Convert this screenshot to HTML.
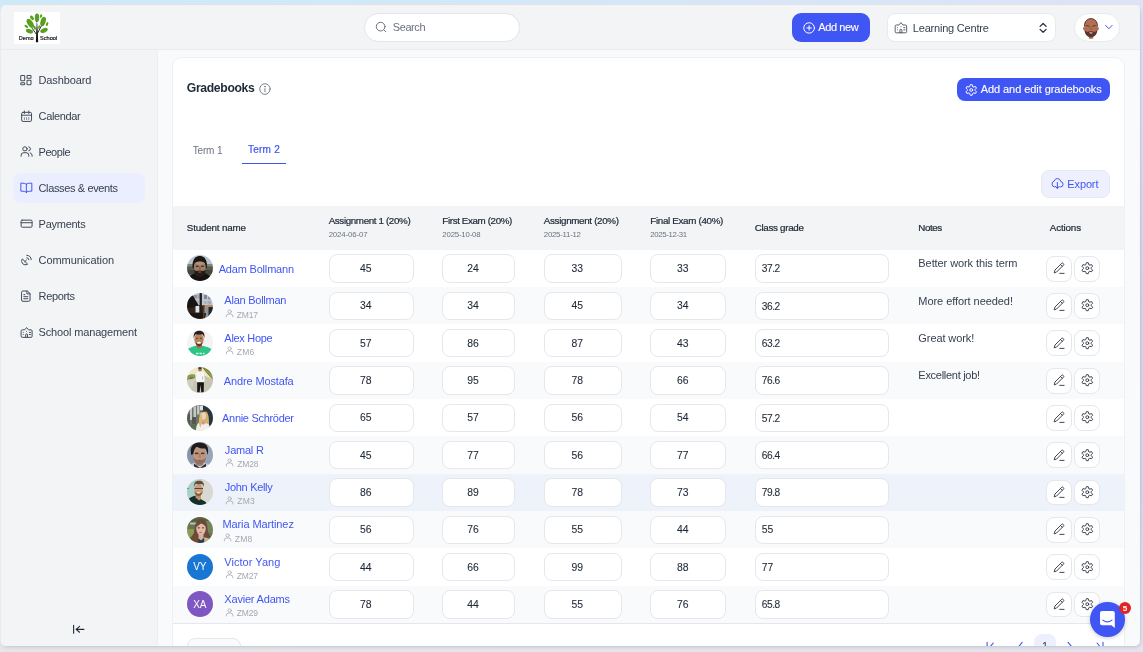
<!DOCTYPE html>
<html lang="en"><head><meta charset="utf-8"><title>Gradebooks</title>
<style>
*{box-sizing:border-box;margin:0;padding:0}
html,body{width:1143px;height:652px;overflow:hidden}
body{position:relative;font-family:"Liberation Sans",sans-serif;background:#e6e7eb;
 background-image:linear-gradient(90deg,#cdeaf8 0%,#d3e8f8 45%,#dee3f8 100%);background-size:100% 30px;background-repeat:no-repeat}
#rstrip{position:absolute;right:0;top:8px;width:8px;height:644px;background:linear-gradient(180deg,#dee3f8 0,#d2d8f2 45%,#d6daf1 75%,#e3e4ee 100%)}
#bstrip{position:absolute;left:0;top:640px;width:1143px;height:12px;background:linear-gradient(90deg,#e6e7ea 0,#e5e6ec 70%,#e3e4ee 100%)}
#ledge{left:0;top:0;width:1px;height:652px;background:#ebebec}
#shadow{position:absolute;left:1px;top:6px;width:1139px;height:640px;border-radius:5px;box-shadow:0 2px 4px -1px rgba(40,40,50,.13), 2px 1px 3px -1px rgba(40,40,60,.10)}
#win{will-change:transform;position:absolute;left:0;top:0;width:1143px;height:652px;clip-path:inset(4px 3.1px 6px 0px round 8px 5px 5px 6px);background:#f9fafb}
#win>*, .abs{position:absolute}
.t{position:absolute;white-space:nowrap;line-height:1}
#top{left:0;top:0;width:1143px;height:49.5px;background:#f3f4f6;border-bottom:1px solid #e9ebee;border-top:5.4px solid #e1e1e3}
#side{left:0;top:49.5px;width:157.5px;height:610px;background:#f3f4f6;border-right:1px solid #eceef1}
#card{left:171.5px;top:57px;width:953px;height:620px;background:#fff;border:1px solid #eef0f3;border-radius:10px}
.pill{background:#fff;border:1px solid #e5e7eb}
.box{background:#fff;border:1px solid #e5e7eb;border-radius:8px;height:28.5px}
.ab{background:#fff;border:1px solid #e5e7eb;border-radius:8px;width:25.5px;height:25.5px}
.av{border-radius:50%;width:26px;height:26px;overflow:hidden}
svg{position:absolute;overflow:visible}
svg.ns *{vector-effect:non-scaling-stroke}

</style></head>
<body>
<div id="rstrip"></div><div id="bstrip"></div>
<div id="shadow"></div>
<div id="win">
<div id="top"></div><div id="side"></div><div id="ledge"></div><div id="card"></div>

<svg style="left:14px;top:12px" width="46" height="32" viewBox="0 0 46 32"><rect width="46" height="32" fill="#fff"/>
<g fill="#57a01d"><ellipse cx="23" cy="5.800" rx="2.200" ry="4.200"/><ellipse cx="18" cy="5.800" rx="1.500" ry="2.600" transform="rotate(-38 18 5.800)"/><ellipse cx="27" cy="4" rx="1.100" ry="1.900" transform="rotate(15 27 4)"/><ellipse cx="16.200" cy="11.300" rx="2.700" ry="5" transform="rotate(-33 16.200 11.300)"/><ellipse cx="29.100" cy="9.500" rx="2.500" ry="4.800" transform="rotate(18 29.100 9.500)"/><ellipse cx="12.300" cy="14.400" rx="1.200" ry="2.100" transform="rotate(-50 12.300 14.400)"/><ellipse cx="33.100" cy="12.100" rx="1.100" ry="2.100" transform="rotate(22 33.100 12.100)"/><ellipse cx="15.500" cy="19.200" rx="3.700" ry="2.100" transform="rotate(18 15.500 19.200)"/><ellipse cx="30" cy="18.400" rx="3.900" ry="2.200" transform="rotate(-24 30 18.400)"/><ellipse cx="20.500" cy="15.600" rx="1.200" ry="2.300" transform="rotate(-25 20.500 15.600)"/><ellipse cx="25.100" cy="15" rx=".9" ry="1.900" transform="rotate(20 25.100 15)"/></g>
<path d="M22.900 7.500 23.700 18.500 24.200 30.300 21.900 30.300 22.300 18.500Z" fill="#111"/>
<path d="M22.600 22.500 18.300 16.500M23.500 21.300 27.300 14" stroke="#1a1a1a" stroke-width=".9" fill="none" stroke-linecap="round"/>
<text x="4.800" y="27.900" font-family="Liberation Sans, sans-serif" font-weight="400" font-size="5.100" fill="#1a1a1a" stroke="#1a1a1a" stroke-width=".18" textLength="14.800" lengthAdjust="spacingAndGlyphs">Demo</text>
<text x="26" y="27.900" font-family="Liberation Sans, sans-serif" font-weight="400" font-size="5.100" fill="#1a1a1a" stroke="#1a1a1a" stroke-width=".18" textLength="17.200" lengthAdjust="spacingAndGlyphs">School</text></svg>

<div class="pill" style="left:363.70px;top:13.10px;width:155.90px;height:28.80px;border-radius:14.4px;border-color:#e2e5e9;"></div>
<svg class="ns" style="left:374.72px;top:21.22px;color:#6b7280" width="12.32" height="12.32" viewBox="0 0 24 24" preserveAspectRatio="none" fill="none" stroke="#6b7280" stroke-width="1.0" stroke-linecap="round" stroke-linejoin="round"><circle cx="11" cy="11" r="8.500"/><path d="M17.500 17.500 21 21"/></svg>
<div style="left:791.70px;top:13.00px;width:78.30px;height:29.20px;background:#4056f4;border-radius:9px;"></div>
<svg class="ns" style="left:802.54px;top:21.56px;color:#fff" width="12.23" height="11.89" viewBox="0 0 24 24" preserveAspectRatio="none" fill="none" stroke="#fff" stroke-width="1.0" stroke-linecap="round" stroke-linejoin="round"><circle cx="12" cy="12" r="10.500"/><path d="M12 7.500v9M7.500 12h9"/></svg>
<div class="pill" style="left:887.30px;top:13.20px;width:169.10px;height:28.60px;border-radius:8px;border-color:#e8eaed;"></div>
<svg class="ns" style="left:893.90px;top:20.74px;color:#434c5a" width="13.80" height="12.88" viewBox="0 0 24 24" preserveAspectRatio="none" fill="none" stroke="#434c5a" stroke-width="0.9" stroke-linecap="round" stroke-linejoin="round"><path d="M2 9.500a2 2 0 0 1 2-2h4.500L12 3l3.500 4.500H20a2 2 0 0 1 2 2V20a2 2 0 0 1-2 2H4a2 2 0 0 1-2-2Z"/><path d="M10.300 22v-5a1.700 1.700 0 0 1 3.400 0V22"/><path d="M12 10.500v.1M6 12.500v.1M6 16.500v.1M17 12.500h2M17 16.500h2"/></svg>
<svg class="ns" style="left:1037.05px;top:21.63px;color:#1f2937" width="12.20" height="11.73" viewBox="0 0 24 24" preserveAspectRatio="none" fill="none" stroke="#1f2937" stroke-width="1.2" stroke-linecap="round" stroke-linejoin="round"><path d="M6 9l6-6 6 6M6 15l6 6 6-6"/></svg>
<div class="pill" style="left:1074.20px;top:13.00px;width:45.70px;height:28.90px;border-radius:14.5px;border-color:#e8eaed;"></div>
<svg style="left:1083px;top:18.300px" width="16" height="21" viewBox="0 0 16 21">
<rect x="5.900" y="17" width="4.300" height="3.700" rx=".6" fill="#b46a4e"/>
<ellipse cx="1" cy="10.600" rx="1" ry="1.500" fill="#ad694d"/><ellipse cx="14.900" cy="10.600" rx="1" ry="1.500" fill="#ad694d"/>
<path d="M1.300 9C1.300 2.500 4.500.5 7.950.5S14.600 2.500 14.600 9c0 6.500-3.300 10-6.650 10S1.300 15.500 1.300 9Z" fill="#b36f53"/>
<path d="M1.500 8.500C1.300 3 4.500.7 7.950.7S14.600 3 14.400 8.500" fill="none" stroke="#4c2c24" stroke-width=".9"/>
<path d="M1.500 11c.6 1.800 1.500 2.600 3 3 1.200-.9 5.700-.9 6.900 0 1.500-.4 2.400-1.200 3-3 .2 5.500-3.200 8.200-6.450 8.200S1.300 16.500 1.500 11Z" fill="#5b352b"/>
<ellipse cx="7.950" cy="14.800" rx="1.700" ry=".9" fill="#c9a39a"/>
<path d="M3.600 7.600l2.400.5M12.300 7.600l-2.400.5" stroke="#3c231d" stroke-width=".8" stroke-linecap="round"/>
<path d="M7.400 8.500h1.100v3.300H7.400Z" fill="#98583f"/>
</svg>

<svg class="ns" style="left:1103.97px;top:22.20px;color:#4056f4" width="9.75" height="10.20" viewBox="0 0 24 24" preserveAspectRatio="none" fill="none" stroke="#4056f4" stroke-width="1.0" stroke-linecap="round" stroke-linejoin="round"><path d="M4 8l8 8 8-8"/></svg>
<div style="left:12.70px;top:172.80px;width:132.80px;height:30.00px;background:#ebeefe;border-radius:8px;"></div>
<svg class="ns" style="left:19.48px;top:73.65px;color:#434c5a" width="13.73" height="11.62" viewBox="0 0 24 24" preserveAspectRatio="none" fill="none" stroke="#434c5a" stroke-width="1.0" stroke-linecap="round" stroke-linejoin="round"><rect x="3" y="3" width="7" height="11" rx="1.5"/><rect x="14" y="3" width="7" height="6" rx="1.5"/><rect x="3" y="18" width="7" height="4" rx="1.5"/><rect x="14" y="13" width="7" height="9" rx="1.5"/></svg>
<svg class="ns" style="left:19.75px;top:109.76px;color:#434c5a" width="13.20" height="12.48" viewBox="0 0 24 24" preserveAspectRatio="none" fill="none" stroke="#434c5a" stroke-width="1.0" stroke-linecap="round" stroke-linejoin="round"><rect x="3" y="4.5" width="18" height="17.5" rx="2.5"/><path d="M3 10h18M8 2v4.500M16 2v4.500"/><path d="M8 14.500v4M12 14.500v4M16 14.500v4" stroke-opacity=".6"/></svg>
<svg class="ns" style="left:19.50px;top:145.30px;color:#434c5a" width="13.20" height="12.32" viewBox="0 0 24 24" preserveAspectRatio="none" fill="none" stroke="#434c5a" stroke-width="1.0" stroke-linecap="round" stroke-linejoin="round"><circle cx="9" cy="7.5" r="4"/><path d="M2 22v-2a5 5 0 0 1 5-5h4a5 5 0 0 1 5 5v2"/><path d="M16 3.6a4 4 0 0 1 0 7.8M22 22v-2a5 5 0 0 0-3.5-4.7"/></svg>
<svg class="ns" style="left:18.77px;top:180.67px;color:#4056f4" width="14.67" height="12.80" viewBox="0 0 24 24" preserveAspectRatio="none" fill="none" stroke="#4056f4" stroke-width="1.0" stroke-linecap="round" stroke-linejoin="round"><path d="M12 6v16M12 6c-1.5-1.5-4-2-9-2v15c5 0 7.5.5 9 2M12 6c1.500-1.500 4-2 9-2v15c-5 0-7.500.5-9 2"/></svg>
<svg class="ns" style="left:19.50px;top:218.17px;color:#434c5a" width="13.20" height="11.36" viewBox="0 0 24 24" preserveAspectRatio="none" fill="none" stroke="#434c5a" stroke-width="1.0" stroke-linecap="round" stroke-linejoin="round"><rect x="2" y="4.500" width="20" height="15" rx="1.800" ry="2.600"/><path d="M2 10h20"/></svg>
<svg class="ns" style="left:19.84px;top:253.50px;color:#434c5a" width="12.57" height="12.44" viewBox="0 0 24 24" preserveAspectRatio="none" fill="none" stroke="#434c5a" stroke-width="1.0" stroke-linecap="round" stroke-linejoin="round"><path d="M4 10a7.300 7.300 0 0 0 10 10Z"/><path d="M9 15l3.500-3.500"/><path d="M13 7a4.500 4.500 0 0 1 4 4M13 2.500a9 9 0 0 1 8.500 8.500"/></svg>
<svg class="ns" style="left:19.35px;top:289.77px;color:#434c5a" width="13.60" height="12.36" viewBox="0 0 24 24" preserveAspectRatio="none" fill="none" stroke="#434c5a" stroke-width="1.0" stroke-linecap="round" stroke-linejoin="round"><path d="M14 2H7a2.500 2.500 0 0 0-2.500 2.500v15A2.500 2.500 0 0 0 7 22h10a2.500 2.500 0 0 0 2.500-2.500V7.500Z"/><path d="M14 2v5.500h5.500M8.500 13h7M8.500 17h7M8.500 9h2"/></svg>
<svg class="ns" style="left:19.50px;top:326.05px;color:#434c5a" width="13.20" height="12.38" viewBox="0 0 24 24" preserveAspectRatio="none" fill="none" stroke="#434c5a" stroke-width="1.0" stroke-linecap="round" stroke-linejoin="round"><path d="M2 9.500a2 2 0 0 1 2-2h4.500L12 3l3.500 4.500H20a2 2 0 0 1 2 2V20a2 2 0 0 1-2 2H4a2 2 0 0 1-2-2Z"/><path d="M10.300 22v-5a1.700 1.700 0 0 1 3.400 0V22"/><path d="M12 10.500v.1M6 12.500v.1M6 16.500v.1M17 12.500h2M17 16.500h2"/></svg>
<svg class="ns" style="left:72.42px;top:623.72px;color:#1f2937" width="13.01" height="10.67" viewBox="0 0 24 24" preserveAspectRatio="none" fill="none" stroke="#1f2937" stroke-width="1.1" stroke-linecap="round" stroke-linejoin="round"><path d="M3 3v18M22 12H8M14 5.500 7.500 12l6.500 6.500"/></svg>
<svg class="ns" style="left:258.71px;top:82.69px;color:#6b7280" width="11.89" height="12.11" viewBox="0 0 24 24" preserveAspectRatio="none" fill="none" stroke="#6b7280" stroke-width="0.9" stroke-linecap="round" stroke-linejoin="round"><circle cx="12" cy="12" r="10.500"/><path d="M12 11v6.500"/><circle cx="12" cy="7.300" r=".6" fill="currentColor"/></svg>
<div style="left:956.80px;top:78.20px;width:153.20px;height:22.70px;background:#4056f4;border-radius:8px;"></div>
<svg class="ns" style="left:965.02px;top:83.83px;color:#fff" width="12.45" height="11.94" viewBox="0 0 24 24" preserveAspectRatio="none" fill="none" stroke="#fff" stroke-width="1.0" stroke-linecap="round" stroke-linejoin="round"><path d="M15.01 5.24 L13.78 1.35 L10.22 1.35 L8.99 5.24 L7.65 6.01 L3.67 5.13 L1.88 8.22 L4.64 11.23 L4.64 12.77 L1.88 15.78 L3.67 18.87 L7.65 17.99 L8.99 18.76 L10.22 22.65 L13.78 22.65 L15.01 18.76 L16.35 17.99 L20.33 18.87 L22.12 15.78 L19.36 12.77 L19.36 11.23 L22.12 8.22 L20.33 5.13 L16.35 6.01Z"/><circle cx="12" cy="12" r="2.8"/></svg>
<div style="left:242.00px;top:162.50px;width:43.80px;height:1.20px;background:#4056f4;"></div>
<div style="left:1041.00px;top:169.50px;width:68.60px;height:28.80px;background:#eef0fd;border:1px solid #e6e8f6;border-radius:8px;"></div>
<svg class="ns" style="left:1051.44px;top:175.97px;color:#4056f4" width="12.72" height="14.20" viewBox="0 0 24 24" preserveAspectRatio="none" fill="none" stroke="#4056f4" stroke-width="1.0" stroke-linecap="round" stroke-linejoin="round"><path d="M7.500 18.500H7A5 5 0 0 1 6 8.600 6.500 6.500 0 0 1 18.500 9.500 4.500 4.500 0 0 1 18 18.500h-1"/><path d="M12 11v10M8.500 17.500 12 21l3.500-3.500"/></svg>
<div style="left:172.50px;top:205.50px;width:951.00px;height:44.30px;background:#f3f4f6;"></div>
<div style="left:172.50px;top:249.75px;width:951.00px;height:37.38px;background:#fff;"></div>
<svg style="left:186.80px;top:255.47px;overflow:hidden;border-radius:50%" width="26" height="26" viewBox="0 0 26 26"><g style="filter:blur(.6px)"><rect width="26" height="26" fill="#5a5b4c"/>
<rect width="26" height="9.300" fill="#b6c5d1"/>
<rect y="9" width="26" height="2.500" fill="#7f867a"/>
<rect y="15" width="26" height="4" fill="#45463a"/>
<ellipse cx="13" cy="27.500" rx="13.500" ry="10" fill="#141311"/>
<path d="M5.700 13C4.800 6 7.500 1 12.800 1s8 5 7 12l-1.200.5-1-6.500h-9.800l-1 6.500Z" fill="#1c1713"/>
<ellipse cx="12.800" cy="12.800" rx="5.900" ry="8.300" fill="#a07f69"/>
<path d="M6.900 9c0-3 2.500-5 5.900-5s5.900 2 5.900 5c-1.500-2-3.500-2.500-5.900-2.500S8.400 7 6.900 9Z" fill="#1c1713"/>
<ellipse cx="12.800" cy="8.300" rx="4" ry="1.600" fill="#b3917b"/>
<ellipse cx="10.200" cy="11.300" rx="1.600" ry=".75" fill="#3b2b24"/><ellipse cx="15.500" cy="11.300" rx="1.600" ry=".75" fill="#3b2b24"/>
<path d="M12.200 11.500h1.200l.5 3h-2.200Z" fill="#8d6852"/>
<path d="M7.100 14.500c0 5.500 2.800 7.600 5.700 7.600s5.700-2.100 5.700-7.600c-1.200 1.200-2 1.500-3 1.500-.8-.7-4.600-.7-5.400 0-1 0-1.800-.3-3-1.500Z" fill="#261c17"/>
<ellipse cx="12.800" cy="17" rx="1.700" ry=".7" fill="#86544e"/></g></svg>
<div class="box" style="left:328.75px;top:254.32px;width:84.75px;height:28.30px;"></div>
<div class="box" style="left:442.00px;top:254.32px;width:72.75px;height:28.30px;"></div>
<div class="box" style="left:543.75px;top:254.32px;width:77.75px;height:28.30px;"></div>
<div class="box" style="left:650.25px;top:254.32px;width:75.50px;height:28.30px;"></div>
<div class="box" style="left:754.50px;top:254.32px;width:134.00px;height:28.30px;"></div>
<div class="ab" style="left:1046.10px;top:255.72px;width:25.50px;height:25.80px;"></div>
<div class="ab" style="left:1074.30px;top:255.72px;width:26.10px;height:25.80px;"></div>
<svg class="ns" style="left:1051.64px;top:261.10px;color:#2b3340" width="13.84" height="13.81" viewBox="0 0 24 24" preserveAspectRatio="none" fill="none" stroke="#2b3340" stroke-width="0.9" stroke-linecap="round" stroke-linejoin="round"><path d="M4 20l1.200-4.300L16.800 4.100a1.800 1.800 0 0 1 2.500 0l.6.6a1.800 1.800 0 0 1 0 2.500L8.300 18.800ZM14.800 6.100l3.100 3.100M13.500 21.500h7.500"/></svg>
<svg class="ns" style="left:1081.07px;top:262.12px;color:#2b3340" width="12.57" height="12.39" viewBox="0 0 24 24" preserveAspectRatio="none" fill="none" stroke="#2b3340" stroke-width="0.9" stroke-linecap="round" stroke-linejoin="round"><path d="M15.01 5.24 L13.78 1.35 L10.22 1.35 L8.99 5.24 L7.65 6.01 L3.67 5.13 L1.88 8.22 L4.64 11.23 L4.64 12.77 L1.88 15.78 L3.67 18.87 L7.65 17.99 L8.99 18.76 L10.22 22.65 L13.78 22.65 L15.01 18.76 L16.35 17.99 L20.33 18.87 L22.12 15.78 L19.36 12.77 L19.36 11.23 L22.12 8.22 L20.33 5.13 L16.35 6.01Z"/><circle cx="12" cy="12" r="2.8"/></svg>
<div style="left:172.50px;top:287.08px;width:951.00px;height:37.38px;background:#f9fafb;"></div>
<svg style="left:186.80px;top:292.80px;overflow:hidden;border-radius:50%" width="26" height="26" viewBox="0 0 26 26"><g style="filter:blur(.6px)"><rect width="26" height="26" fill="#c3c8d0"/>
<rect x="7" y="2" width="3" height="3.500" fill="#8d97a6"/><rect x="10.500" y="1.500" width="2" height="4" fill="#99a3b0"/>
<rect x="17" y="2" width="3" height="4" fill="#7e8896"/><rect x="21" y="3.500" width="2.500" height="3" fill="#8a94a2"/>
<rect x="8" y="7.500" width="4" height="3" fill="#a9b1bc"/><rect x="17" y="8" width="2.500" height="3" fill="#aab2bd"/><rect x="20.500" y="8" width="3.500" height="3.500" fill="#a2abb7"/>
<path d="M0 3 6 2.500 9 8 11.500 12 10 13.500 10.500 20 0 24Z" fill="#171412"/>
<path d="M0 15 8 14 12 12 16 12.500 17.500 26H0Z" fill="#33241b"/>
<rect x="8.500" y="13" width="4" height="6.500" fill="#dfe3e8"/>
<rect x="12.600" y="0" width="2.300" height="26" fill="#211e1d"/>
<path d="M16 12h10v3H16Z" fill="#b98d68"/>
<path d="M17.500 14.500H26V26H17.500Z" fill="#8d939c"/>
<path d="M21.500 14h4.500v10h-4.500Z" fill="#23262b"/>
<path d="M3 20h16l-1 6H5Z" fill="#191513"/>
<rect x="16" y="12" width="1.600" height="14" fill="#5a3a26"/></g></svg>
<div class="box" style="left:328.75px;top:291.64px;width:84.75px;height:28.30px;"></div>
<div class="box" style="left:442.00px;top:291.64px;width:72.75px;height:28.30px;"></div>
<div class="box" style="left:543.75px;top:291.64px;width:77.75px;height:28.30px;"></div>
<div class="box" style="left:650.25px;top:291.64px;width:75.50px;height:28.30px;"></div>
<div class="box" style="left:754.50px;top:291.64px;width:134.00px;height:28.30px;"></div>
<div class="ab" style="left:1046.10px;top:293.05px;width:25.50px;height:25.80px;"></div>
<div class="ab" style="left:1074.30px;top:293.05px;width:26.10px;height:25.80px;"></div>
<svg class="ns" style="left:1051.64px;top:298.43px;color:#2b3340" width="13.84" height="13.81" viewBox="0 0 24 24" preserveAspectRatio="none" fill="none" stroke="#2b3340" stroke-width="0.9" stroke-linecap="round" stroke-linejoin="round"><path d="M4 20l1.200-4.300L16.800 4.100a1.800 1.800 0 0 1 2.500 0l.6.6a1.800 1.800 0 0 1 0 2.500L8.300 18.800ZM14.800 6.100l3.100 3.100M13.500 21.500h7.500"/></svg>
<svg class="ns" style="left:1081.07px;top:299.45px;color:#2b3340" width="12.57" height="12.39" viewBox="0 0 24 24" preserveAspectRatio="none" fill="none" stroke="#2b3340" stroke-width="0.9" stroke-linecap="round" stroke-linejoin="round"><path d="M15.01 5.24 L13.78 1.35 L10.22 1.35 L8.99 5.24 L7.65 6.01 L3.67 5.13 L1.88 8.22 L4.64 11.23 L4.64 12.77 L1.88 15.78 L3.67 18.87 L7.65 17.99 L8.99 18.76 L10.22 22.65 L13.78 22.65 L15.01 18.76 L16.35 17.99 L20.33 18.87 L22.12 15.78 L19.36 12.77 L19.36 11.23 L22.12 8.22 L20.33 5.13 L16.35 6.01Z"/><circle cx="12" cy="12" r="2.8"/></svg>
<svg class="ns" style="left:224.78px;top:308.97px;color:#a9aeb6" width="9.25" height="8.68" viewBox="0 0 24 24" preserveAspectRatio="none" fill="none" stroke="#a9aeb6" stroke-width="0.85" stroke-linecap="round" stroke-linejoin="round"><circle cx="12" cy="7" r="4.500"/><path d="M3.500 22v-2a6 6 0 0 1 6-6h5a6 6 0 0 1 6 6v2"/></svg>
<div style="left:172.50px;top:324.41px;width:951.00px;height:37.38px;background:#fff;"></div>
<svg style="left:186.80px;top:330.12px;overflow:hidden;border-radius:50%" width="26" height="26" viewBox="0 0 26 26"><g style="filter:blur(.6px)"><rect width="26" height="26" fill="#f3f3f3"/>
<path d="M0 26V20c2-2.500 6-3.500 9-4.200h6.500c3.500.7 7.500 2 10.500 4.500V26Z" fill="#2bc686"/>
<path d="M9.500 13h5.500v4.500c-1.500 1.500-4 1.500-5.500 0Z" fill="#a8754f"/>
<ellipse cx="12" cy="9.300" rx="4.700" ry="6.200" fill="#b7835e"/>
<path d="M6.800 8.500C6 3 8.500.8 12.300.8c3.500 0 6 2 5 7.200-.5-2.200-1.300-3.400-2-3.800-2 .5-5 .5-6.500 0-.9.700-1.600 2-2 4.300Z" fill="#271f1d"/>
<path d="M8.500 12.500c.5 2.800 2 4 3.500 4s3-1.200 3.500-4c-1 1-2 1.300-3.500 1.300s-2.500-.3-3.500-1.300Z" fill="#5e3c2a"/>
<ellipse cx="12" cy="12.700" rx="2" ry="1" fill="#f6efe9"/>
<ellipse cx="10" cy="8.300" rx="1.100" ry=".5" fill="#4a3022"/><ellipse cx="14" cy="8.300" rx="1.100" ry=".5" fill="#4a3022"/>
<path d="M9 23.500h2.500M12.500 23.500H15M16 23.500h1.500" stroke="#d9f5e8" stroke-width="1.500"/></g></svg>
<div class="box" style="left:328.75px;top:328.97px;width:84.75px;height:28.30px;"></div>
<div class="box" style="left:442.00px;top:328.97px;width:72.75px;height:28.30px;"></div>
<div class="box" style="left:543.75px;top:328.97px;width:77.75px;height:28.30px;"></div>
<div class="box" style="left:650.25px;top:328.97px;width:75.50px;height:28.30px;"></div>
<div class="box" style="left:754.50px;top:328.97px;width:134.00px;height:28.30px;"></div>
<div class="ab" style="left:1046.10px;top:330.38px;width:25.50px;height:25.80px;"></div>
<div class="ab" style="left:1074.30px;top:330.38px;width:26.10px;height:25.80px;"></div>
<svg class="ns" style="left:1051.64px;top:335.76px;color:#2b3340" width="13.84" height="13.81" viewBox="0 0 24 24" preserveAspectRatio="none" fill="none" stroke="#2b3340" stroke-width="0.9" stroke-linecap="round" stroke-linejoin="round"><path d="M4 20l1.200-4.300L16.800 4.100a1.800 1.800 0 0 1 2.500 0l.6.6a1.800 1.800 0 0 1 0 2.500L8.300 18.800ZM14.800 6.100l3.100 3.100M13.500 21.500h7.500"/></svg>
<svg class="ns" style="left:1081.07px;top:336.78px;color:#2b3340" width="12.57" height="12.39" viewBox="0 0 24 24" preserveAspectRatio="none" fill="none" stroke="#2b3340" stroke-width="0.9" stroke-linecap="round" stroke-linejoin="round"><path d="M15.01 5.24 L13.78 1.35 L10.22 1.35 L8.99 5.24 L7.65 6.01 L3.67 5.13 L1.88 8.22 L4.64 11.23 L4.64 12.77 L1.88 15.78 L3.67 18.87 L7.65 17.99 L8.99 18.76 L10.22 22.65 L13.78 22.65 L15.01 18.76 L16.35 17.99 L20.33 18.87 L22.12 15.78 L19.36 12.77 L19.36 11.23 L22.12 8.22 L20.33 5.13 L16.35 6.01Z"/><circle cx="12" cy="12" r="2.8"/></svg>
<svg class="ns" style="left:224.78px;top:346.30px;color:#a9aeb6" width="9.25" height="8.68" viewBox="0 0 24 24" preserveAspectRatio="none" fill="none" stroke="#a9aeb6" stroke-width="0.85" stroke-linecap="round" stroke-linejoin="round"><circle cx="12" cy="7" r="4.500"/><path d="M3.500 22v-2a6 6 0 0 1 6-6h5a6 6 0 0 1 6 6v2"/></svg>
<div style="left:172.50px;top:361.74px;width:951.00px;height:37.38px;background:#f9fafb;"></div>
<svg style="left:186.80px;top:367.46px;overflow:hidden;border-radius:50%" width="26" height="26" viewBox="0 0 26 26"><g style="filter:blur(.6px)"><rect width="26" height="26" fill="#c8c3b3"/>
<path d="M0 0h26v12L13 7 0 11Z" fill="#efe8c6"/>
<path d="M15 0h11v12.500C22 9 18 4 15 0Z" fill="#6c7b3a"/>
<path d="M17 1c3 2 6 5 9 8v3c-3-4-7-8-9-11Z" fill="#a0a347"/>
<path d="M0 9c2-1.500 5-2 8-1.500v3.500L2 13H0Z" fill="#8d9a52"/>
<ellipse cx="5" cy="11.500" rx="2.500" ry="1.300" fill="#56703f"/>
<path d="M0 13l8-2v3L3 26H0Z" fill="#d2cdbd"/>
<rect x="11.300" y=".4" width="3.400" height="4.200" rx="1.500" fill="#a27352"/>
<rect x="11.200" y=".2" width="3.600" height="1.500" rx=".7" fill="#2a211c"/>
<path d="M9.300 5.500c1-1.300 6.500-1.300 7.500 0l1 8.500-1 .5v1H9.800v-1l-1-.5Z" fill="#f5f5f1"/>
<path d="M10.200 15.300h6.700l-.2 9.900h-2.400l-.8-7.500-.9 7.500h-2.400Z" fill="#161616"/>
<path d="M15.500 9.500v3" stroke="#b9c3cf" stroke-width="1"/></g></svg>
<div class="box" style="left:328.75px;top:366.31px;width:84.75px;height:28.30px;"></div>
<div class="box" style="left:442.00px;top:366.31px;width:72.75px;height:28.30px;"></div>
<div class="box" style="left:543.75px;top:366.31px;width:77.75px;height:28.30px;"></div>
<div class="box" style="left:650.25px;top:366.31px;width:75.50px;height:28.30px;"></div>
<div class="box" style="left:754.50px;top:366.31px;width:134.00px;height:28.30px;"></div>
<div class="ab" style="left:1046.10px;top:367.71px;width:25.50px;height:25.80px;"></div>
<div class="ab" style="left:1074.30px;top:367.71px;width:26.10px;height:25.80px;"></div>
<svg class="ns" style="left:1051.64px;top:373.09px;color:#2b3340" width="13.84" height="13.81" viewBox="0 0 24 24" preserveAspectRatio="none" fill="none" stroke="#2b3340" stroke-width="0.9" stroke-linecap="round" stroke-linejoin="round"><path d="M4 20l1.200-4.300L16.800 4.100a1.800 1.800 0 0 1 2.500 0l.6.6a1.800 1.800 0 0 1 0 2.500L8.300 18.800ZM14.800 6.100l3.100 3.100M13.500 21.500h7.500"/></svg>
<svg class="ns" style="left:1081.07px;top:374.11px;color:#2b3340" width="12.57" height="12.39" viewBox="0 0 24 24" preserveAspectRatio="none" fill="none" stroke="#2b3340" stroke-width="0.9" stroke-linecap="round" stroke-linejoin="round"><path d="M15.01 5.24 L13.78 1.35 L10.22 1.35 L8.99 5.24 L7.65 6.01 L3.67 5.13 L1.88 8.22 L4.64 11.23 L4.64 12.77 L1.88 15.78 L3.67 18.87 L7.65 17.99 L8.99 18.76 L10.22 22.65 L13.78 22.65 L15.01 18.76 L16.35 17.99 L20.33 18.87 L22.12 15.78 L19.36 12.77 L19.36 11.23 L22.12 8.22 L20.33 5.13 L16.35 6.01Z"/><circle cx="12" cy="12" r="2.8"/></svg>
<div style="left:172.50px;top:399.07px;width:951.00px;height:37.38px;background:#fff;"></div>
<svg style="left:186.80px;top:404.79px;overflow:hidden;border-radius:50%" width="26" height="26" viewBox="0 0 26 26"><g style="filter:blur(.6px)"><rect width="26" height="26" fill="#6d746b"/>
<path d="M13 0h13v20h-4c-2-6-5-12-9-14Z" fill="#2a3440"/>
<path d="M3 3h2v12H3ZM6.500 1.500h2.500v13H6.500ZM10 .5h2.500v9H10Z" fill="#c3c8c4"/>
<path d="M0 9h3v13H0Z" fill="#545a54"/><path d="M5 12h4v12H5Z" fill="#525950"/>
<path d="M13 .5h3v5h-3Z" fill="#dfe3df"/>
<path d="M4 19h6v7H4Z" fill="#5c7050"/>
<path d="M14 6.500c3.500-1.500 7 .5 7.500 4.500s.8 8 0 11l-3 1-5.500-1c-1-4-1.500-12 1-15.500Z" fill="#d3b271"/>
<ellipse cx="16.300" cy="10.800" rx="2.700" ry="3.600" fill="#ebd3bf"/>
<path d="M9 26c0-5 1.500-8.500 5-9.500l3.500 1.500 4 1c1 2 1.500 4.500 1.500 7Z" fill="#efeee9"/>
<path d="M12 14c1-2 2-3 2.500-6l1 8-2 6.500c-1.500-2-2-6-1.500-8.500Z" fill="#dcb96f"/>
<ellipse cx="16.300" cy="18" rx="1.700" ry="1.500" fill="#d98d96"/>
<path d="M14.500 6c2-1 5-.5 6.500 1.500-2-1-4.500-1-6.500 0Z" fill="#57503a"/></g></svg>
<div class="box" style="left:328.75px;top:403.63px;width:84.75px;height:28.30px;"></div>
<div class="box" style="left:442.00px;top:403.63px;width:72.75px;height:28.30px;"></div>
<div class="box" style="left:543.75px;top:403.63px;width:77.75px;height:28.30px;"></div>
<div class="box" style="left:650.25px;top:403.63px;width:75.50px;height:28.30px;"></div>
<div class="box" style="left:754.50px;top:403.63px;width:134.00px;height:28.30px;"></div>
<div class="ab" style="left:1046.10px;top:405.04px;width:25.50px;height:25.80px;"></div>
<div class="ab" style="left:1074.30px;top:405.04px;width:26.10px;height:25.80px;"></div>
<svg class="ns" style="left:1051.64px;top:410.42px;color:#2b3340" width="13.84" height="13.81" viewBox="0 0 24 24" preserveAspectRatio="none" fill="none" stroke="#2b3340" stroke-width="0.9" stroke-linecap="round" stroke-linejoin="round"><path d="M4 20l1.200-4.300L16.800 4.100a1.800 1.800 0 0 1 2.500 0l.6.6a1.800 1.800 0 0 1 0 2.500L8.300 18.800ZM14.800 6.100l3.100 3.100M13.500 21.500h7.500"/></svg>
<svg class="ns" style="left:1081.07px;top:411.44px;color:#2b3340" width="12.57" height="12.39" viewBox="0 0 24 24" preserveAspectRatio="none" fill="none" stroke="#2b3340" stroke-width="0.9" stroke-linecap="round" stroke-linejoin="round"><path d="M15.01 5.24 L13.78 1.35 L10.22 1.35 L8.99 5.24 L7.65 6.01 L3.67 5.13 L1.88 8.22 L4.64 11.23 L4.64 12.77 L1.88 15.78 L3.67 18.87 L7.65 17.99 L8.99 18.76 L10.22 22.65 L13.78 22.65 L15.01 18.76 L16.35 17.99 L20.33 18.87 L22.12 15.78 L19.36 12.77 L19.36 11.23 L22.12 8.22 L20.33 5.13 L16.35 6.01Z"/><circle cx="12" cy="12" r="2.8"/></svg>
<div style="left:172.50px;top:436.40px;width:951.00px;height:37.38px;background:#f9fafb;"></div>
<svg style="left:186.80px;top:442.12px;overflow:hidden;border-radius:50%" width="26" height="26" viewBox="0 0 26 26"><g style="filter:blur(.6px)"><rect width="26" height="26" fill="#98a5b8"/>
<path d="M0 0h7v26H0Z" fill="#8895a9"/>
<path d="M1 26c1-3 4-4.500 6.500-5h10c3 .5 6 2 7.500 5Z" fill="#c9d1e0"/>
<path d="M7 21.500l6 4.500 6-4.500v4.500H7Z" fill="#2a2a31"/>
<path d="M8.500 17h8v5.500c-2.500 2-5.500 2-8 0Z" fill="#a57e68"/>
<ellipse cx="12.700" cy="13" rx="6.600" ry="9.200" fill="#be957d"/>
<path d="M4.300 13C2.500 6 5 1 12.500.6c6.500 0 10 4 8.300 12.400-.6-1-.8-4.500-2.600-6.500-2.300.2-6-.3-8.500-1.800-2 1.500-3 3.800-3.400 7.300Z" fill="#1f1b1b"/>
<path d="M6.400 15.500c.5 4.500 3.300 7 6.300 7s5.800-2.500 6.300-7c-1.500 2-3.800 2.800-6.300 2.800s-4.800-.8-6.300-2.800Z" fill="#94705e"/>
<ellipse cx="9.700" cy="11.300" rx="1.900" ry=".9" fill="#463630"/><ellipse cx="15.700" cy="11.300" rx="1.900" ry=".9" fill="#463630"/>
<path d="M12.100 11.500h1.300l.6 4h-2.500Z" fill="#a87f69"/>
<ellipse cx="12.700" cy="18.600" rx="2.200" ry=".75" fill="#9c5c5a"/></g></svg>
<div class="box" style="left:328.75px;top:440.96px;width:84.75px;height:28.30px;"></div>
<div class="box" style="left:442.00px;top:440.96px;width:72.75px;height:28.30px;"></div>
<div class="box" style="left:543.75px;top:440.96px;width:77.75px;height:28.30px;"></div>
<div class="box" style="left:650.25px;top:440.96px;width:75.50px;height:28.30px;"></div>
<div class="box" style="left:754.50px;top:440.96px;width:134.00px;height:28.30px;"></div>
<div class="ab" style="left:1046.10px;top:442.37px;width:25.50px;height:25.80px;"></div>
<div class="ab" style="left:1074.30px;top:442.37px;width:26.10px;height:25.80px;"></div>
<svg class="ns" style="left:1051.64px;top:447.75px;color:#2b3340" width="13.84" height="13.81" viewBox="0 0 24 24" preserveAspectRatio="none" fill="none" stroke="#2b3340" stroke-width="0.9" stroke-linecap="round" stroke-linejoin="round"><path d="M4 20l1.200-4.300L16.800 4.100a1.800 1.800 0 0 1 2.500 0l.6.6a1.800 1.800 0 0 1 0 2.500L8.300 18.800ZM14.800 6.100l3.100 3.100M13.500 21.500h7.500"/></svg>
<svg class="ns" style="left:1081.07px;top:448.77px;color:#2b3340" width="12.57" height="12.39" viewBox="0 0 24 24" preserveAspectRatio="none" fill="none" stroke="#2b3340" stroke-width="0.9" stroke-linecap="round" stroke-linejoin="round"><path d="M15.01 5.24 L13.78 1.35 L10.22 1.35 L8.99 5.24 L7.65 6.01 L3.67 5.13 L1.88 8.22 L4.64 11.23 L4.64 12.77 L1.88 15.78 L3.67 18.87 L7.65 17.99 L8.99 18.76 L10.22 22.65 L13.78 22.65 L15.01 18.76 L16.35 17.99 L20.33 18.87 L22.12 15.78 L19.36 12.77 L19.36 11.23 L22.12 8.22 L20.33 5.13 L16.35 6.01Z"/><circle cx="12" cy="12" r="2.8"/></svg>
<svg class="ns" style="left:225.28px;top:458.29px;color:#a9aeb6" width="9.25" height="8.68" viewBox="0 0 24 24" preserveAspectRatio="none" fill="none" stroke="#a9aeb6" stroke-width="0.85" stroke-linecap="round" stroke-linejoin="round"><circle cx="12" cy="7" r="4.500"/><path d="M3.500 22v-2a6 6 0 0 1 6-6h5a6 6 0 0 1 6 6v2"/></svg>
<div style="left:172.50px;top:473.73px;width:951.00px;height:37.38px;background:#edf2fb;"></div>
<svg style="left:186.80px;top:479.45px;overflow:hidden;border-radius:50%" width="26" height="26" viewBox="0 0 26 26"><g style="filter:blur(.6px)"><rect width="26" height="26" fill="#d9d9d1"/>
<path d="M0 0h15l-2 26H0Z" fill="#a9d1c9"/>
<path d="M9 0h7l-1 14H9Z" fill="#b7d9d2"/>
<path d="M1.500 20c2-2 5-3 7-3.200l5 3.200 4.500 2.500c1 1 1.800 2 2 3.500H3Z" fill="#13302a"/>
<path d="M8.500 14.500h5l.5 5.500-2 1.500-3.500-3Z" fill="#c4906e"/>
<ellipse cx="11.600" cy="10.800" rx="4.400" ry="5.800" fill="#cb9c7b"/>
<path d="M7 8.500C6.500 4 8.500 1.800 11.500 1.800c3.500-.3 6 1.500 5.300 6-.5-1.500-1.300-2.500-2-2.800-2 .5-4.500.3-6-.3-1 .8-1.500 2-1.800 3.800Z" fill="#6b4a37"/>
<path d="M7.500 12.500c.3 3 2 4.800 4 4.800s3.800-1.800 4.200-4.800c-1 1.300-2.500 1.800-4.200 1.800s-3-.5-4-1.800Z" fill="#8d5c42"/>
<path d="M7.500 9.500h8.500" stroke="#3a2c26" stroke-width=".8"/>
<ellipse cx="11.600" cy="13.800" rx="1.700" ry=".7" fill="#f0e2d8"/>
<circle cx=".8" cy="9.500" r=".7" fill="#2a3a38"/></g></svg>
<div class="box" style="left:328.75px;top:478.30px;width:84.75px;height:28.30px;"></div>
<div class="box" style="left:442.00px;top:478.30px;width:72.75px;height:28.30px;"></div>
<div class="box" style="left:543.75px;top:478.30px;width:77.75px;height:28.30px;"></div>
<div class="box" style="left:650.25px;top:478.30px;width:75.50px;height:28.30px;"></div>
<div class="box" style="left:754.50px;top:478.30px;width:134.00px;height:28.30px;"></div>
<div class="ab" style="left:1046.10px;top:479.70px;width:25.50px;height:25.80px;"></div>
<div class="ab" style="left:1074.30px;top:479.70px;width:26.10px;height:25.80px;"></div>
<svg class="ns" style="left:1051.64px;top:485.08px;color:#2b3340" width="13.84" height="13.81" viewBox="0 0 24 24" preserveAspectRatio="none" fill="none" stroke="#2b3340" stroke-width="0.9" stroke-linecap="round" stroke-linejoin="round"><path d="M4 20l1.200-4.300L16.800 4.100a1.800 1.800 0 0 1 2.500 0l.6.6a1.800 1.800 0 0 1 0 2.500L8.300 18.800ZM14.800 6.100l3.100 3.100M13.500 21.500h7.500"/></svg>
<svg class="ns" style="left:1081.07px;top:486.10px;color:#2b3340" width="12.57" height="12.39" viewBox="0 0 24 24" preserveAspectRatio="none" fill="none" stroke="#2b3340" stroke-width="0.9" stroke-linecap="round" stroke-linejoin="round"><path d="M15.01 5.24 L13.78 1.35 L10.22 1.35 L8.99 5.24 L7.65 6.01 L3.67 5.13 L1.88 8.22 L4.64 11.23 L4.64 12.77 L1.88 15.78 L3.67 18.87 L7.65 17.99 L8.99 18.76 L10.22 22.65 L13.78 22.65 L15.01 18.76 L16.35 17.99 L20.33 18.87 L22.12 15.78 L19.36 12.77 L19.36 11.23 L22.12 8.22 L20.33 5.13 L16.35 6.01Z"/><circle cx="12" cy="12" r="2.8"/></svg>
<svg class="ns" style="left:225.28px;top:495.62px;color:#a9aeb6" width="9.25" height="8.68" viewBox="0 0 24 24" preserveAspectRatio="none" fill="none" stroke="#a9aeb6" stroke-width="0.85" stroke-linecap="round" stroke-linejoin="round"><circle cx="12" cy="7" r="4.500"/><path d="M3.500 22v-2a6 6 0 0 1 6-6h5a6 6 0 0 1 6 6v2"/></svg>
<div style="left:172.50px;top:511.06px;width:951.00px;height:37.38px;background:#f9fafb;"></div>
<svg style="left:186.80px;top:516.77px;overflow:hidden;border-radius:50%" width="26" height="26" viewBox="0 0 26 26"><g style="filter:blur(.6px)"><rect width="26" height="26" fill="#67764f"/>
<path d="M0 0h26v6H0Z" fill="#56623f"/>
<path d="M3 5.500h7v2H3Z" fill="#b4c4c6"/>
<path d="M0 12h7v8H0Z" fill="#8b9a58"/>
<path d="M18 4h8v12h-8Z" fill="#74835a"/>
<path d="M9 6c1-3.500 4-4.500 7-3.500 3.500 1 4.500 5 4.500 9 0 3 1.500 6 3 8.500L21 22l-5-2-5 1-1 5H6c-2-1-3-3-2.500-5 2-2.500 4-5 4-8 0-2.500.5-5 1.500-7Z" fill="#6a4a38"/>
<path d="M11.500 17h5v4.500l-2.500 2-2.500-2Z" fill="#d8ae9c"/>
<ellipse cx="14" cy="11.800" rx="4.700" ry="6.200" fill="#e2baa9"/>
<path d="M9.500 10c.5-3 2-5 4.500-5.500 2.500 0 4.500 2 5 5-1.500-1.500-3-2.500-5-3-1.500 1.200-3 2.500-4.500 3.500Z" fill="#6a4a38"/>
<ellipse cx="11.800" cy="10.800" rx="1.200" ry=".6" fill="#4a342c"/><ellipse cx="16" cy="10.800" rx="1.200" ry=".6" fill="#4a342c"/>
<ellipse cx="13.600" cy="15.500" rx="1.700" ry=".8" fill="#d0707a"/>
<path d="M11 21.500l3 2 3-2.500.5 5H11Z" fill="#2b3b51"/>
<path d="M17 20.500c2 0 4.500.5 6 2l-2 3.500h-3.500Z" fill="#c9b099"/>
<path d="M5 19c2-1 4.500-.5 6 1.500l.5 5.500H7c-1.500-1.500-2.500-4-2-7Z" fill="#6f4b36"/></g></svg>
<div class="box" style="left:328.75px;top:515.62px;width:84.75px;height:28.30px;"></div>
<div class="box" style="left:442.00px;top:515.62px;width:72.75px;height:28.30px;"></div>
<div class="box" style="left:543.75px;top:515.62px;width:77.75px;height:28.30px;"></div>
<div class="box" style="left:650.25px;top:515.62px;width:75.50px;height:28.30px;"></div>
<div class="box" style="left:754.50px;top:515.62px;width:134.00px;height:28.30px;"></div>
<div class="ab" style="left:1046.10px;top:517.02px;width:25.50px;height:25.80px;"></div>
<div class="ab" style="left:1074.30px;top:517.02px;width:26.10px;height:25.80px;"></div>
<svg class="ns" style="left:1051.64px;top:522.41px;color:#2b3340" width="13.84" height="13.81" viewBox="0 0 24 24" preserveAspectRatio="none" fill="none" stroke="#2b3340" stroke-width="0.9" stroke-linecap="round" stroke-linejoin="round"><path d="M4 20l1.200-4.300L16.800 4.100a1.800 1.800 0 0 1 2.500 0l.6.6a1.800 1.800 0 0 1 0 2.500L8.300 18.800ZM14.800 6.100l3.100 3.100M13.500 21.500h7.500"/></svg>
<svg class="ns" style="left:1081.07px;top:523.43px;color:#2b3340" width="12.57" height="12.39" viewBox="0 0 24 24" preserveAspectRatio="none" fill="none" stroke="#2b3340" stroke-width="0.9" stroke-linecap="round" stroke-linejoin="round"><path d="M15.01 5.24 L13.78 1.35 L10.22 1.35 L8.99 5.24 L7.65 6.01 L3.67 5.13 L1.88 8.22 L4.64 11.23 L4.64 12.77 L1.88 15.78 L3.67 18.87 L7.65 17.99 L8.99 18.76 L10.22 22.65 L13.78 22.65 L15.01 18.76 L16.35 17.99 L20.33 18.87 L22.12 15.78 L19.36 12.77 L19.36 11.23 L22.12 8.22 L20.33 5.13 L16.35 6.01Z"/><circle cx="12" cy="12" r="2.8"/></svg>
<svg class="ns" style="left:223.28px;top:532.95px;color:#a9aeb6" width="9.25" height="8.68" viewBox="0 0 24 24" preserveAspectRatio="none" fill="none" stroke="#a9aeb6" stroke-width="0.85" stroke-linecap="round" stroke-linejoin="round"><circle cx="12" cy="7" r="4.500"/><path d="M3.500 22v-2a6 6 0 0 1 6-6h5a6 6 0 0 1 6 6v2"/></svg>
<div style="left:172.50px;top:548.39px;width:951.00px;height:37.38px;background:#fff;"></div>
<div class="av" style="left:186.80px;top:554.10px;background:#1976d2"></div>
<div class="box" style="left:328.75px;top:552.95px;width:84.75px;height:28.30px;"></div>
<div class="box" style="left:442.00px;top:552.95px;width:72.75px;height:28.30px;"></div>
<div class="box" style="left:543.75px;top:552.95px;width:77.75px;height:28.30px;"></div>
<div class="box" style="left:650.25px;top:552.95px;width:75.50px;height:28.30px;"></div>
<div class="box" style="left:754.50px;top:552.95px;width:134.00px;height:28.30px;"></div>
<div class="ab" style="left:1046.10px;top:554.35px;width:25.50px;height:25.80px;"></div>
<div class="ab" style="left:1074.30px;top:554.35px;width:26.10px;height:25.80px;"></div>
<svg class="ns" style="left:1051.64px;top:559.74px;color:#2b3340" width="13.84" height="13.81" viewBox="0 0 24 24" preserveAspectRatio="none" fill="none" stroke="#2b3340" stroke-width="0.9" stroke-linecap="round" stroke-linejoin="round"><path d="M4 20l1.200-4.300L16.800 4.100a1.800 1.800 0 0 1 2.500 0l.6.6a1.800 1.800 0 0 1 0 2.500L8.300 18.800ZM14.800 6.100l3.100 3.100M13.500 21.500h7.500"/></svg>
<svg class="ns" style="left:1081.07px;top:560.76px;color:#2b3340" width="12.57" height="12.39" viewBox="0 0 24 24" preserveAspectRatio="none" fill="none" stroke="#2b3340" stroke-width="0.9" stroke-linecap="round" stroke-linejoin="round"><path d="M15.01 5.24 L13.78 1.35 L10.22 1.35 L8.99 5.24 L7.65 6.01 L3.67 5.13 L1.88 8.22 L4.64 11.23 L4.64 12.77 L1.88 15.78 L3.67 18.87 L7.65 17.99 L8.99 18.76 L10.22 22.65 L13.78 22.65 L15.01 18.76 L16.35 17.99 L20.33 18.87 L22.12 15.78 L19.36 12.77 L19.36 11.23 L22.12 8.22 L20.33 5.13 L16.35 6.01Z"/><circle cx="12" cy="12" r="2.8"/></svg>
<svg class="ns" style="left:224.78px;top:570.28px;color:#a9aeb6" width="9.25" height="8.68" viewBox="0 0 24 24" preserveAspectRatio="none" fill="none" stroke="#a9aeb6" stroke-width="0.85" stroke-linecap="round" stroke-linejoin="round"><circle cx="12" cy="7" r="4.500"/><path d="M3.500 22v-2a6 6 0 0 1 6-6h5a6 6 0 0 1 6 6v2"/></svg>
<div style="left:172.50px;top:585.72px;width:951.00px;height:37.38px;background:#f9fafb;"></div>
<div class="av" style="left:186.80px;top:591.43px;background:#7e57c2"></div>
<div class="box" style="left:328.75px;top:590.28px;width:84.75px;height:28.30px;"></div>
<div class="box" style="left:442.00px;top:590.28px;width:72.75px;height:28.30px;"></div>
<div class="box" style="left:543.75px;top:590.28px;width:77.75px;height:28.30px;"></div>
<div class="box" style="left:650.25px;top:590.28px;width:75.50px;height:28.30px;"></div>
<div class="box" style="left:754.50px;top:590.28px;width:134.00px;height:28.30px;"></div>
<div class="ab" style="left:1046.10px;top:591.68px;width:25.50px;height:25.80px;"></div>
<div class="ab" style="left:1074.30px;top:591.68px;width:26.10px;height:25.80px;"></div>
<svg class="ns" style="left:1051.64px;top:597.07px;color:#2b3340" width="13.84" height="13.81" viewBox="0 0 24 24" preserveAspectRatio="none" fill="none" stroke="#2b3340" stroke-width="0.9" stroke-linecap="round" stroke-linejoin="round"><path d="M4 20l1.200-4.300L16.800 4.100a1.800 1.800 0 0 1 2.500 0l.6.6a1.800 1.800 0 0 1 0 2.500L8.300 18.800ZM14.800 6.100l3.100 3.100M13.500 21.500h7.500"/></svg>
<svg class="ns" style="left:1081.07px;top:598.09px;color:#2b3340" width="12.57" height="12.39" viewBox="0 0 24 24" preserveAspectRatio="none" fill="none" stroke="#2b3340" stroke-width="0.9" stroke-linecap="round" stroke-linejoin="round"><path d="M15.01 5.24 L13.78 1.35 L10.22 1.35 L8.99 5.24 L7.65 6.01 L3.67 5.13 L1.88 8.22 L4.64 11.23 L4.64 12.77 L1.88 15.78 L3.67 18.87 L7.65 17.99 L8.99 18.76 L10.22 22.65 L13.78 22.65 L15.01 18.76 L16.35 17.99 L20.33 18.87 L22.12 15.78 L19.36 12.77 L19.36 11.23 L22.12 8.22 L20.33 5.13 L16.35 6.01Z"/><circle cx="12" cy="12" r="2.8"/></svg>
<svg class="ns" style="left:224.78px;top:607.61px;color:#a9aeb6" width="9.25" height="8.68" viewBox="0 0 24 24" preserveAspectRatio="none" fill="none" stroke="#a9aeb6" stroke-width="0.85" stroke-linecap="round" stroke-linejoin="round"><circle cx="12" cy="7" r="4.500"/><path d="M3.500 22v-2a6 6 0 0 1 6-6h5a6 6 0 0 1 6 6v2"/></svg>
<div style="left:172.50px;top:623.30px;width:951.00px;height:1.00px;background:#e5e7eb;"></div>
<div class="pill" style="left:186.60px;top:638.00px;width:54.20px;height:30.00px;border-radius:8px;background:#f9fafb;"></div>
<div style="left:1034.20px;top:633.90px;width:22.00px;height:30.00px;background:#eceffe;border-radius:8px;"></div>
<svg class="ns" style="left:985.01px;top:639.92px;color:#4056f4" width="10.29" height="14.55" viewBox="0 0 24 24" preserveAspectRatio="none" fill="none" stroke="#4056f4" stroke-width="1.1" stroke-linecap="round" stroke-linejoin="round"><path d="M5 4v16M19 5l-8 7 8 7"/></svg>
<svg class="ns" style="left:1013.65px;top:639.92px;color:#4056f4" width="12.30" height="14.55" viewBox="0 0 24 24" preserveAspectRatio="none" fill="none" stroke="#4056f4" stroke-width="1.1" stroke-linecap="round" stroke-linejoin="round"><path d="M16 4l-8 8 8 8"/></svg>
<svg class="ns" style="left:1064.05px;top:639.92px;color:#4056f4" width="12.30" height="14.55" viewBox="0 0 24 24" preserveAspectRatio="none" fill="none" stroke="#4056f4" stroke-width="1.1" stroke-linecap="round" stroke-linejoin="round"><path d="M8 4l8 8-8 8"/></svg>
<svg class="ns" style="left:1095.04px;top:639.92px;color:#4056f4" width="10.11" height="14.55" viewBox="0 0 24 24" preserveAspectRatio="none" fill="none" stroke="#4056f4" stroke-width="1.1" stroke-linecap="round" stroke-linejoin="round"><path d="M19 4v16M5 5l8 7-8 7"/></svg>
<div style="left:1090.20px;top:602.10px;width:34.60px;height:34.60px;background:#4056f4;border-radius:50%;box-shadow:0 1px 4px rgba(0,0,0,.2);"></div>
<svg style="left:1100px;top:610.6px" width="14.8" height="17.1" viewBox="0 0 15.6 18"><path d="M2.200 0h11.200a2.200 2.200 0 0 1 2.200 2.200V18l-3.600-3H2.200A2.200 2.200 0 0 1 0 12.800V2.200A2.200 2.200 0 0 1 2.200 0Z" fill="#fff"/><path d="M3 9.600c2.800 2.200 6.800 2.200 9.600 0" fill="none" stroke="#4056f4" stroke-width="1.300" stroke-linecap="round"/></svg>
<div style="left:1119.00px;top:602.00px;width:12.20px;height:12.20px;background:#e02424;border-radius:50%;"></div>
<!-- text -->
<span class="t" style="left:392.85px;top:22.39px;font-size:11px;color:#6b7280;letter-spacing:-0.440px;">Search</span>
<span class="t" style="left:818.35px;top:22.39px;font-size:11px;color:#fff;-webkit-text-stroke:0.11px #fff;letter-spacing:-0.417px;">Add new</span>
<span class="t" style="left:912.85px;top:22.59px;font-size:11px;color:#374151;letter-spacing:-0.207px;">Learning Centre</span>
<span class="t" style="left:980.65px;top:84.39px;font-size:11px;color:#fff;-webkit-text-stroke:0.11px #fff;letter-spacing:-0.059px;">Add and edit gradebooks</span>
<span class="t" style="left:38.55px;top:75.19px;font-size:11px;color:#374151;letter-spacing:-0.125px;">Dashboard</span>
<span class="t" style="left:38.55px;top:111.29px;font-size:11px;color:#374151;letter-spacing:-0.343px;">Calendar</span>
<span class="t" style="left:38.55px;top:147.19px;font-size:11px;color:#374151;letter-spacing:-0.440px;">People</span>
<span class="t" style="left:38.55px;top:183.39px;font-size:11px;color:#374151;letter-spacing:-0.373px;">Classes &amp; events</span>
<span class="t" style="left:38.55px;top:219.09px;font-size:11px;color:#374151;letter-spacing:-0.257px;">Payments</span>
<span class="t" style="left:38.55px;top:255.19px;font-size:11px;color:#374151;letter-spacing:-0.075px;">Communication</span>
<span class="t" style="left:38.55px;top:291.19px;font-size:11px;color:#374151;letter-spacing:-0.350px;">Reports</span>
<span class="t" style="left:38.55px;top:327.19px;font-size:11px;color:#374151;letter-spacing:-0.150px;">School management</span>
<span class="t" style="left:186.85px;top:82.37px;font-size:12.2px;color:#1f2937;font-weight:700;letter-spacing:-0.356px;">Gradebooks</span>
<span class="t" style="left:192.65px;top:146.13px;font-size:10px;color:#6b7280;letter-spacing:-0.140px;">Term 1</span>
<span class="t" style="left:248.05px;top:145.13px;font-size:10px;color:#4056f4;-webkit-text-stroke:0.22px #4056f4;letter-spacing:0.220px;">Term 2</span>
<span class="t" style="left:1067.35px;top:179.39px;font-size:11px;color:#4056f4;letter-spacing:-0.140px;">Export</span>
<span class="t" style="left:186.85px;top:223.10px;font-size:9.8px;color:#1f2937;-webkit-text-stroke:0.22px #1f2937;letter-spacing:-0.173px;">Student name</span>
<span class="t" style="left:328.65px;top:216.10px;font-size:9.8px;color:#1f2937;-webkit-text-stroke:0.22px #1f2937;letter-spacing:-0.365px;">Assignment 1 (20%)</span>
<span class="t" style="left:328.65px;top:230.80px;font-size:7.8px;color:#6b7280;letter-spacing:-0.111px;">2024-06-07</span>
<span class="t" style="left:442.35px;top:216.10px;font-size:9.8px;color:#1f2937;-webkit-text-stroke:0.22px #1f2937;letter-spacing:-0.380px;">First Exam (20%)</span>
<span class="t" style="left:442.35px;top:230.80px;font-size:7.8px;color:#6b7280;letter-spacing:-0.189px;">2025-10-08</span>
<span class="t" style="left:543.85px;top:216.10px;font-size:9.8px;color:#1f2937;-webkit-text-stroke:0.22px #1f2937;letter-spacing:-0.327px;">Assignment (20%)</span>
<span class="t" style="left:543.85px;top:230.80px;font-size:7.8px;color:#6b7280;letter-spacing:-0.244px;">2025-11-12</span>
<span class="t" style="left:650.35px;top:216.10px;font-size:9.8px;color:#1f2937;-webkit-text-stroke:0.22px #1f2937;letter-spacing:-0.327px;">Final Exam (40%)</span>
<span class="t" style="left:650.35px;top:230.80px;font-size:7.8px;color:#6b7280;letter-spacing:-0.356px;">2025-12-31</span>
<span class="t" style="left:754.65px;top:223.10px;font-size:9.8px;color:#1f2937;-webkit-text-stroke:0.22px #1f2937;letter-spacing:-0.300px;">Class grade</span>
<span class="t" style="left:918.35px;top:223.10px;font-size:9.8px;color:#1f2937;-webkit-text-stroke:0.22px #1f2937;letter-spacing:-0.425px;">Notes</span>
<span class="t" style="left:1049.85px;top:223.10px;font-size:9.8px;color:#1f2937;-webkit-text-stroke:0.22px #1f2937;letter-spacing:-0.150px;">Actions</span>
<span class="t" style="left:218.65px;top:264.00px;font-size:11px;color:#4056f4;letter-spacing:-0.183px;">Adam Bollmann</span>
<span class="t" style="left:360.03px;top:264.11px;font-size:10.4px;color:#1f2937;-webkit-text-stroke:0.09px #1f2937;">45</span>
<span class="t" style="left:467.28px;top:264.11px;font-size:10.4px;color:#1f2937;-webkit-text-stroke:0.09px #1f2937;">24</span>
<span class="t" style="left:571.53px;top:264.11px;font-size:10.4px;color:#1f2937;-webkit-text-stroke:0.09px #1f2937;">33</span>
<span class="t" style="left:676.90px;top:264.11px;font-size:10.4px;color:#1f2937;-webkit-text-stroke:0.09px #1f2937;">33</span>
<span class="t" style="left:761.75px;top:264.28px;font-size:10.2px;color:#1f2937;-webkit-text-stroke:0.09px #1f2937;letter-spacing:-0.45px;">37.2</span>
<span class="t" style="left:918.35px;top:258.20px;font-size:11px;color:#374151;letter-spacing:-0.085px;">Better work this term</span>
<span class="t" style="left:224.35px;top:295.43px;font-size:11px;color:#4056f4;letter-spacing:-0.245px;">Alan Bollman</span>
<span class="t" style="left:236.85px;top:310.80px;font-size:8.5px;color:#a3a8b0;letter-spacing:-0.233px;">ZM17</span>
<span class="t" style="left:360.03px;top:301.44px;font-size:10.4px;color:#1f2937;-webkit-text-stroke:0.09px #1f2937;">34</span>
<span class="t" style="left:467.28px;top:301.44px;font-size:10.4px;color:#1f2937;-webkit-text-stroke:0.09px #1f2937;">34</span>
<span class="t" style="left:571.53px;top:301.44px;font-size:10.4px;color:#1f2937;-webkit-text-stroke:0.09px #1f2937;">45</span>
<span class="t" style="left:676.90px;top:301.44px;font-size:10.4px;color:#1f2937;-webkit-text-stroke:0.09px #1f2937;">34</span>
<span class="t" style="left:761.75px;top:301.61px;font-size:10.2px;color:#1f2937;-webkit-text-stroke:0.09px #1f2937;letter-spacing:-0.45px;">36.2</span>
<span class="t" style="left:918.35px;top:295.53px;font-size:11px;color:#374151;letter-spacing:-0.067px;">More effort needed!</span>
<span class="t" style="left:224.35px;top:332.76px;font-size:11px;color:#4056f4;letter-spacing:-0.300px;">Alex Hope</span>
<span class="t" style="left:236.85px;top:348.13px;font-size:8.5px;color:#a3a8b0;letter-spacing:0.250px;">ZM6</span>
<span class="t" style="left:360.03px;top:338.77px;font-size:10.4px;color:#1f2937;-webkit-text-stroke:0.09px #1f2937;">57</span>
<span class="t" style="left:467.28px;top:338.77px;font-size:10.4px;color:#1f2937;-webkit-text-stroke:0.09px #1f2937;">86</span>
<span class="t" style="left:571.53px;top:338.77px;font-size:10.4px;color:#1f2937;-webkit-text-stroke:0.09px #1f2937;">87</span>
<span class="t" style="left:676.90px;top:338.77px;font-size:10.4px;color:#1f2937;-webkit-text-stroke:0.09px #1f2937;">43</span>
<span class="t" style="left:761.75px;top:338.94px;font-size:10.2px;color:#1f2937;-webkit-text-stroke:0.09px #1f2937;letter-spacing:-0.45px;">63.2</span>
<span class="t" style="left:918.35px;top:332.86px;font-size:11px;color:#374151;letter-spacing:-0.090px;">Great work!</span>
<span class="t" style="left:223.85px;top:375.99px;font-size:11px;color:#4056f4;letter-spacing:-0.142px;">Andre Mostafa</span>
<span class="t" style="left:360.03px;top:376.10px;font-size:10.4px;color:#1f2937;-webkit-text-stroke:0.09px #1f2937;">78</span>
<span class="t" style="left:467.28px;top:376.10px;font-size:10.4px;color:#1f2937;-webkit-text-stroke:0.09px #1f2937;">95</span>
<span class="t" style="left:571.53px;top:376.10px;font-size:10.4px;color:#1f2937;-webkit-text-stroke:0.09px #1f2937;">78</span>
<span class="t" style="left:676.90px;top:376.10px;font-size:10.4px;color:#1f2937;-webkit-text-stroke:0.09px #1f2937;">66</span>
<span class="t" style="left:761.75px;top:376.27px;font-size:10.2px;color:#1f2937;-webkit-text-stroke:0.09px #1f2937;letter-spacing:-0.45px;">76.6</span>
<span class="t" style="left:918.35px;top:370.19px;font-size:11px;color:#374151;letter-spacing:-0.285px;">Excellent job!</span>
<span class="t" style="left:222.05px;top:413.32px;font-size:11px;color:#4056f4;letter-spacing:-0.300px;">Annie Schröder</span>
<span class="t" style="left:360.03px;top:413.43px;font-size:10.4px;color:#1f2937;-webkit-text-stroke:0.09px #1f2937;">65</span>
<span class="t" style="left:467.28px;top:413.43px;font-size:10.4px;color:#1f2937;-webkit-text-stroke:0.09px #1f2937;">57</span>
<span class="t" style="left:571.53px;top:413.43px;font-size:10.4px;color:#1f2937;-webkit-text-stroke:0.09px #1f2937;">56</span>
<span class="t" style="left:676.90px;top:413.43px;font-size:10.4px;color:#1f2937;-webkit-text-stroke:0.09px #1f2937;">54</span>
<span class="t" style="left:761.75px;top:413.60px;font-size:10.2px;color:#1f2937;-webkit-text-stroke:0.09px #1f2937;letter-spacing:-0.45px;">57.2</span>
<span class="t" style="left:224.85px;top:444.75px;font-size:11px;color:#4056f4;letter-spacing:-0.217px;">Jamal R</span>
<span class="t" style="left:237.35px;top:460.12px;font-size:8.5px;color:#a3a8b0;letter-spacing:-0.233px;">ZM28</span>
<span class="t" style="left:360.03px;top:450.76px;font-size:10.4px;color:#1f2937;-webkit-text-stroke:0.09px #1f2937;">45</span>
<span class="t" style="left:467.28px;top:450.76px;font-size:10.4px;color:#1f2937;-webkit-text-stroke:0.09px #1f2937;">77</span>
<span class="t" style="left:571.53px;top:450.76px;font-size:10.4px;color:#1f2937;-webkit-text-stroke:0.09px #1f2937;">56</span>
<span class="t" style="left:676.90px;top:450.76px;font-size:10.4px;color:#1f2937;-webkit-text-stroke:0.09px #1f2937;">77</span>
<span class="t" style="left:761.75px;top:450.93px;font-size:10.2px;color:#1f2937;-webkit-text-stroke:0.09px #1f2937;letter-spacing:-0.45px;">66.4</span>
<span class="t" style="left:224.85px;top:482.08px;font-size:11px;color:#4056f4;letter-spacing:-0.322px;">John Kelly</span>
<span class="t" style="left:237.35px;top:497.45px;font-size:8.5px;color:#a3a8b0;letter-spacing:0.250px;">ZM3</span>
<span class="t" style="left:360.03px;top:488.09px;font-size:10.4px;color:#1f2937;-webkit-text-stroke:0.09px #1f2937;">86</span>
<span class="t" style="left:467.28px;top:488.09px;font-size:10.4px;color:#1f2937;-webkit-text-stroke:0.09px #1f2937;">89</span>
<span class="t" style="left:571.53px;top:488.09px;font-size:10.4px;color:#1f2937;-webkit-text-stroke:0.09px #1f2937;">78</span>
<span class="t" style="left:676.90px;top:488.09px;font-size:10.4px;color:#1f2937;-webkit-text-stroke:0.09px #1f2937;">73</span>
<span class="t" style="left:761.75px;top:488.26px;font-size:10.2px;color:#1f2937;-webkit-text-stroke:0.09px #1f2937;letter-spacing:-0.45px;">79.8</span>
<span class="t" style="left:222.45px;top:519.41px;font-size:11px;color:#4056f4;letter-spacing:-0.100px;">Maria Martinez</span>
<span class="t" style="left:234.85px;top:534.78px;font-size:8.5px;color:#a3a8b0;letter-spacing:0.250px;">ZM8</span>
<span class="t" style="left:360.03px;top:525.42px;font-size:10.4px;color:#1f2937;-webkit-text-stroke:0.09px #1f2937;">56</span>
<span class="t" style="left:467.28px;top:525.42px;font-size:10.4px;color:#1f2937;-webkit-text-stroke:0.09px #1f2937;">76</span>
<span class="t" style="left:571.53px;top:525.42px;font-size:10.4px;color:#1f2937;-webkit-text-stroke:0.09px #1f2937;">55</span>
<span class="t" style="left:676.90px;top:525.42px;font-size:10.4px;color:#1f2937;-webkit-text-stroke:0.09px #1f2937;">44</span>
<span class="t" style="left:761.75px;top:525.42px;font-size:10.4px;color:#1f2937;-webkit-text-stroke:0.09px #1f2937;">55</span>
<span class="t" style="left:224.35px;top:556.74px;font-size:11px;color:#4056f4;letter-spacing:0.030px;">Victor Yang</span>
<span class="t" style="left:236.85px;top:572.11px;font-size:8.5px;color:#a3a8b0;letter-spacing:-0.233px;">ZM27</span>
<span class="t" style="left:360.03px;top:562.75px;font-size:10.4px;color:#1f2937;-webkit-text-stroke:0.09px #1f2937;">44</span>
<span class="t" style="left:467.28px;top:562.75px;font-size:10.4px;color:#1f2937;-webkit-text-stroke:0.09px #1f2937;">66</span>
<span class="t" style="left:571.53px;top:562.75px;font-size:10.4px;color:#1f2937;-webkit-text-stroke:0.09px #1f2937;">99</span>
<span class="t" style="left:676.90px;top:562.75px;font-size:10.4px;color:#1f2937;-webkit-text-stroke:0.09px #1f2937;">88</span>
<span class="t" style="left:761.75px;top:562.75px;font-size:10.4px;color:#1f2937;-webkit-text-stroke:0.09px #1f2937;">77</span>
<span class="t" style="left:224.35px;top:594.07px;font-size:11px;color:#4056f4;letter-spacing:-0.200px;">Xavier Adams</span>
<span class="t" style="left:236.85px;top:609.44px;font-size:8.5px;color:#a3a8b0;letter-spacing:-0.233px;">ZM29</span>
<span class="t" style="left:360.03px;top:600.08px;font-size:10.4px;color:#1f2937;-webkit-text-stroke:0.09px #1f2937;">78</span>
<span class="t" style="left:467.28px;top:600.08px;font-size:10.4px;color:#1f2937;-webkit-text-stroke:0.09px #1f2937;">44</span>
<span class="t" style="left:571.53px;top:600.08px;font-size:10.4px;color:#1f2937;-webkit-text-stroke:0.09px #1f2937;">55</span>
<span class="t" style="left:676.90px;top:600.08px;font-size:10.4px;color:#1f2937;-webkit-text-stroke:0.09px #1f2937;">76</span>
<span class="t" style="left:761.75px;top:600.25px;font-size:10.2px;color:#1f2937;-webkit-text-stroke:0.09px #1f2937;letter-spacing:-0.45px;">65.8</span>
<span class="t" style="left:199.80px;top:562.49px;font-size:10px;color:#fff;transform:translateX(-50%);">VY</span>
<span class="t" style="left:199.80px;top:599.82px;font-size:10px;color:#fff;transform:translateX(-50%);">XA</span>
<span class="t" style="left:1125.10px;top:604.93px;font-size:8px;color:#fff;font-weight:700;transform:translateX(-50%);">5</span>
<span class="t" style="left:1045.10px;top:641.53px;font-size:10px;color:#1f2937;transform:translateX(-50%);">1</span>
</div>

</body></html>
